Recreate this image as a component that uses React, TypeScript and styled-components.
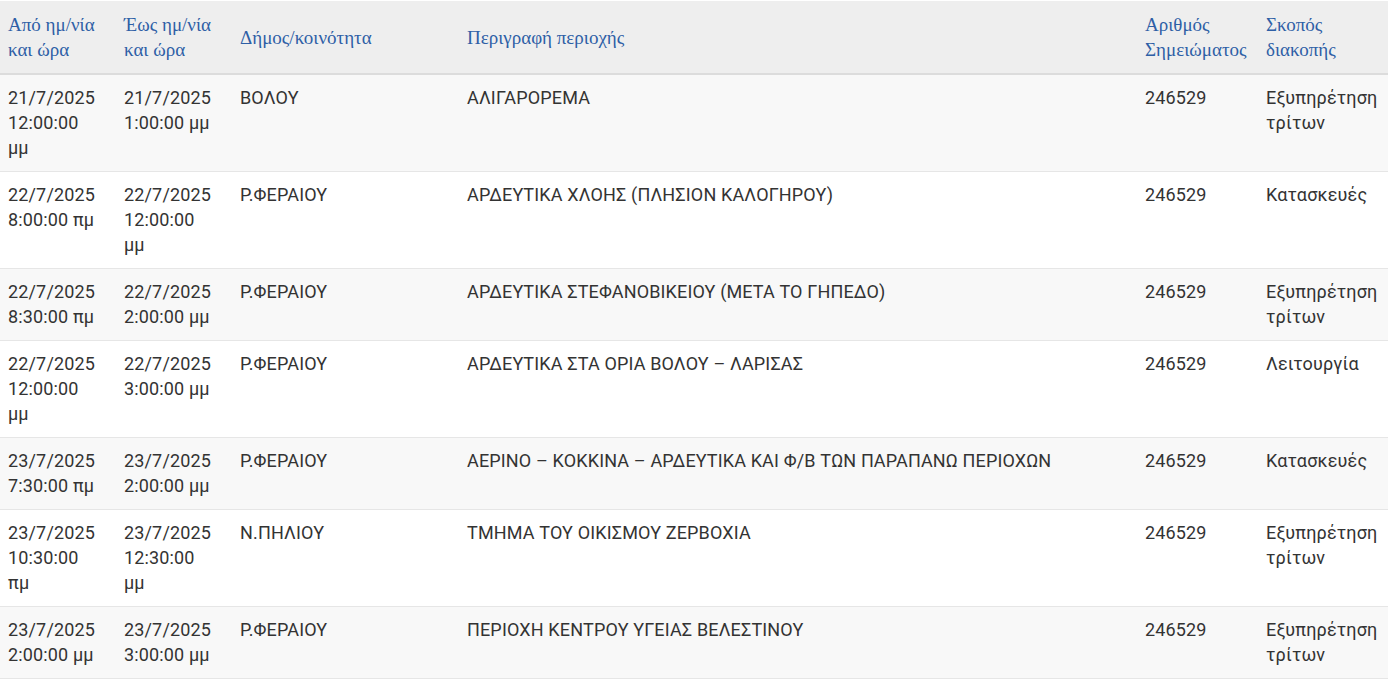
import React from 'react';
import styled, { createGlobalStyle } from 'styled-components';

const GlobalStyle = createGlobalStyle`
  body {
    margin: 0;
    background: #ffffff;
    font-family: Roboto, "Noto Sans", sans-serif;
  }
`;

interface Outage {
  from: string;
  to: string;
  area: string;
  description: string;
  note: string;
  reason: string;
}

const outages: Outage[] = [
  { from: '21/7/2025 12:00:00 μμ', to: '21/7/2025 1:00:00 μμ', area: 'ΒΟΛΟΥ', description: 'ΑΛΙΓΑΡΟΡΕΜΑ', note: '246529', reason: 'Εξυπηρέτηση τρίτων' },
  { from: '22/7/2025 8:00:00 πμ', to: '22/7/2025 12:00:00 μμ', area: 'Ρ.ΦΕΡΑΙΟΥ', description: 'ΑΡΔΕΥΤΙΚΑ ΧΛΟΗΣ (ΠΛΗΣΙΟΝ ΚΑΛΟΓΗΡΟΥ)', note: '246529', reason: 'Κατασκευές' },
  { from: '22/7/2025 8:30:00 πμ', to: '22/7/2025 2:00:00 μμ', area: 'Ρ.ΦΕΡΑΙΟΥ', description: 'ΑΡΔΕΥΤΙΚΑ ΣΤΕΦΑΝΟΒΙΚΕΙΟΥ (ΜΕΤΑ ΤΟ ΓΗΠΕΔΟ)', note: '246529', reason: 'Εξυπηρέτηση τρίτων' },
  { from: '22/7/2025 12:00:00 μμ', to: '22/7/2025 3:00:00 μμ', area: 'Ρ.ΦΕΡΑΙΟΥ', description: 'ΑΡΔΕΥΤΙΚΑ ΣΤΑ ΟΡΙΑ ΒΟΛΟΥ – ΛΑΡΙΣΑΣ', note: '246529', reason: 'Λειτουργία' },
  { from: '23/7/2025 7:30:00 πμ', to: '23/7/2025 2:00:00 μμ', area: 'Ρ.ΦΕΡΑΙΟΥ', description: 'ΑΕΡΙΝΟ – ΚΟΚΚΙΝΑ – ΑΡΔΕΥΤΙΚΑ ΚΑΙ Φ/Β ΤΩΝ ΠΑΡΑΠΑΝΩ ΠΕΡΙΟΧΩΝ', note: '246529', reason: 'Κατασκευές' },
  { from: '23/7/2025 10:30:00 πμ', to: '23/7/2025 12:30:00 μμ', area: 'Ν.ΠΗΛΙΟΥ', description: 'ΤΜΗΜΑ ΤΟΥ ΟΙΚΙΣΜΟΥ ΖΕΡΒΟΧΙΑ', note: '246529', reason: 'Εξυπηρέτηση τρίτων' },
  { from: '23/7/2025 2:00:00 μμ', to: '23/7/2025 3:00:00 μμ', area: 'Ρ.ΦΕΡΑΙΟΥ', description: 'ΠΕΡΙΟΧΗ ΚΕΝΤΡΟΥ ΥΓΕΙΑΣ ΒΕΛΕΣΤΙΝΟΥ', note: '246529', reason: 'Εξυπηρέτηση τρίτων' },
];

const columns = [
  { title: 'Από ημ/νία και ώρα', width: 116 },
  { title: 'Έως ημ/νία και ώρα', width: 116 },
  { title: 'Δήμος/κοινότητα', width: 227 },
  { title: 'Περιγραφή περιοχής', width: 678 },
  { title: 'Αριθμός Σημειώματος', width: 121 },
  { title: 'Σκοπός διακοπής', width: 130 },
];

const App: React.FC = () => (
  <>
    <GlobalStyle />
    <Table>
      <colgroup>
        {columns.map((c) => (
          <col key={c.title} style={{ width: c.width }} />
        ))}
      </colgroup>
      <thead>
        <tr>
          {columns.map((c) => (
            <HeadCell key={c.title}>{c.title}</HeadCell>
          ))}
        </tr>
      </thead>
      <tbody>
        {outages.map((o, i) => (
          <Row key={i} striped={i % 2 === 0}>
            <Cell>{o.from}</Cell>
            <Cell>{o.to}</Cell>
            <Cell>{o.area}</Cell>
            <Cell>{o.description}</Cell>
            <Cell>{o.note}</Cell>
            <Cell>{o.reason}</Cell>
          </Row>
        ))}
      </tbody>
    </Table>
  </>
);

export default App;

const Table = styled.table`
  width: 1388px;
  table-layout: fixed;
  border-collapse: collapse;
  margin-top: 1px;
`;

const HeadCell = styled.th`
  background: #eeeeee;
  border-bottom: 2px solid #dcdcdc;
  padding: 11px 14px 11px 8px;
  text-align: left;
  vertical-align: middle;
  font-family: "Liberation Serif", "DejaVu Serif", serif;
  font-weight: normal;
  font-size: 19px;
  line-height: 25px;
  color: #2e5fa6;
`;

const Row = styled.tr<{ striped: boolean }>`
  background: ${({ striped }) => (striped ? '#f8f8f8' : '#ffffff')};
  border-bottom: 1px solid #e6e6e6;
`;

const Cell = styled.td`
  padding: 10px 16px 11px 8px;
  vertical-align: top;
  font-family: Roboto, "Noto Sans", sans-serif;
  font-size: 18px;
  letter-spacing: 0.15px;
  line-height: 25px;
  color: #333333;
`;
